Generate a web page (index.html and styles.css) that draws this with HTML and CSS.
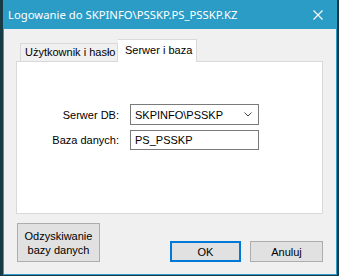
FILE: index.html
```html
<!DOCTYPE html>
<html lang="pl">
<head>
    <meta charset="UTF-8">
    <title>Logowanie do SKPINFO\PSSKP.PS_PSSKP.KZ</title>
    <link rel="stylesheet" href="styles.css">
</head>
<body>

    <div class="window">
        <div class="titlebar">
            <span class="title">Logowanie do SKPINFO\PSSKP.PS_PSSKP.KZ</span>
            <svg class="close" width="10" height="10" viewBox="0 0 10 10">
                <path d="M0.5 0.5 L9.5 9.5 M9.5 0.5 L0.5 9.5" stroke="#fff" stroke-width="1.1" fill="none"/>
            </svg>
        </div>

        <div class="content">
            <!-- Tabs -->
            <div class="tabs">
                <div class="tab">Użytkownik i hasło</div>
                <div class="tab active">Serwer i baza</div>
            </div>

            <div class="panel">
                <div class="form">
                    <label class="label">Serwer DB:</label>
                    <div class="select">
                        <span>SKPINFO\PSSKP</span>
                        <svg width="8" height="5" viewBox="0 0 8 5">
                            <path d="M0.5 0.5 L4 4 L7.5 0.5" stroke="#444" stroke-width="1" fill="none"/>
                        </svg>
                    </div>
                    <label class="label">Baza danych:</label>
                    <div class="input">PS_PSSKP</div>
                </div>
            </div>

            <div class="footer">
                <button class="btn recover">Odzyskiwanie<br>bazy danych</button>
                <button class="btn ok">OK</button>
                <button class="btn cancel">Anuluj</button>
            </div>
        </div>
    </div>

</body>
</html>
```

FILE: styles.css
```css
body {
    margin: 0;
    padding: 0;
    background: #163a46;
    font-family: "Liberation Sans", Arial, sans-serif;
    font-size: 11px;
    color: #000;
}

.window {
    margin: 0 2px 0 3px;
    height: 274px;
    border: 1px solid #2b9cc6;
    border-top: none;
    background: #f0f0f0;
    display: flex;
    flex-direction: column;
}

.titlebar {
    height: 29px;
    background: #2b9cc6;
    color: white;
    display: flex;
    align-items: center;
    justify-content: space-between;
    padding: 0 12px 0 4px;
    flex-shrink: 0;
}

.title {
    font-family: "Noto Sans", sans-serif;
    font-size: 11.3px;
    margin-top: -1px;
}

.close {
    margin-right: 1px;
}

.content {
    padding: 10px 13px 0 12px;
}

.tabs {
    display: flex;
    align-items: flex-end;
    padding-left: 4px;
    height: 22px;
}

.tab {
    box-sizing: border-box;
    height: 18px;
    width: 98px;
    padding: 2px 0 0 4px;
    border: 1px solid #d9d9d9;
    border-bottom: none;
    background: #f0f0f0;
    white-space: nowrap;
}

.tab.active {
    height: 23px;
    width: 79px;
    padding: 4px 0 0 7px;
    border-left: none;
    background: #fff;
    margin-bottom: -1px;
    position: relative;
}

.panel {
    box-sizing: border-box;
    height: 153px;
    border: 1px solid #d9d9d9;
    background: #fff;
}

.form {
    display: grid;
    grid-template-columns: 102px 129px;
    column-gap: 11px;
    row-gap: 5px;
    margin-top: 42px;
    align-items: center;
}

.label {
    text-align: right;
}

.select,
.input {
    box-sizing: border-box;
    border: 1px solid #7a7a7a;
    background: #fff;
    padding: 0 4px;
    display: flex;
    align-items: center;
}

.select {
    height: 21px;
    justify-content: space-between;
    padding-right: 6px;
}

.input {
    height: 20px;
}

.footer {
    display: flex;
    align-items: flex-end;
    margin-top: 9px;
}

.btn {
    box-sizing: border-box;
    font-family: "Liberation Sans", Arial, sans-serif;
    font-size: 11px;
    color: #000;
    background: #e1e1e1;
    border: 1px solid #adadad;
    padding: 0;
    height: 21px;
}

.recover {
    width: 83px;
    height: 39px;
    margin-left: 1px;
    line-height: 14px;
}

.ok {
    width: 71px;
    margin-left: 70px;
    border: 2px solid #0078d7;
}

.cancel {
    width: 73px;
    margin-left: 9px;
}
```
